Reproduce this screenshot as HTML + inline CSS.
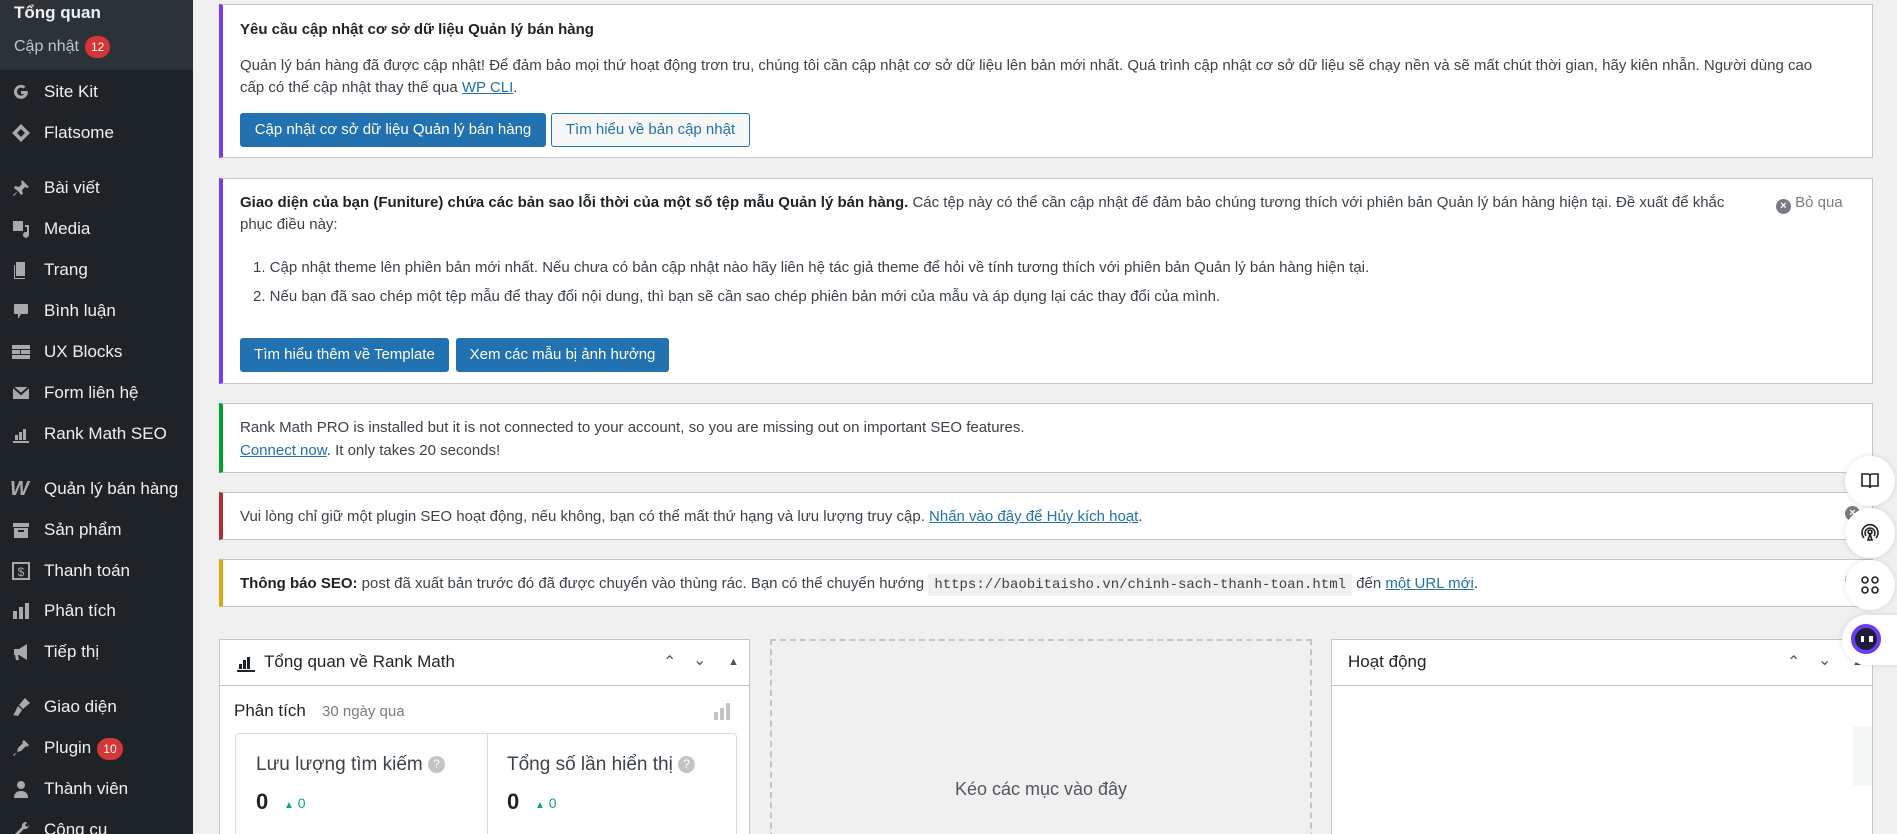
<!DOCTYPE html>
<html style="height:834px;overflow:hidden"><head><meta charset="utf-8"><style>
*{box-sizing:border-box;margin:0;padding:0}
body{width:1897px;height:834px;overflow:hidden;background:#f0f0f1;font-family:"Liberation Sans","Noto Sans CJK SC",sans-serif;color:#3c434a;font-size:15px;position:relative}
.sb{position:absolute;left:0;top:0;width:193px;height:834px;background:#1d2327}
.sbtop{position:absolute;left:0;top:0;width:193px;height:70px;background:#2c3338}
.mi{position:absolute;left:0;height:40px;line-height:40px;color:#f0f0f1;font-size:17px;white-space:nowrap}
.mi .ic{position:absolute;left:10px;top:10px;width:22px;height:20px;color:#a7aaad}
.mi span.t{position:absolute;left:44px}
.badge{display:inline-block;background:#d63638;color:#fff;border-radius:12px;font-size:12px;height:22px;line-height:22px;padding:0 6px;margin-left:6px;vertical-align:middle}
.n{position:absolute;left:219px;width:1654px;background:#fff;border:1px solid #c3c4c7;border-left:4px solid #72aee6}
.n p{position:absolute;left:17px;white-space:nowrap;line-height:22px}
a{color:#2271b1;text-decoration:underline}
.btn{position:absolute;height:34px;line-height:32px;border-radius:3px;background:#2271b1;color:#fff;font-size:15px;text-align:center;border:1px solid #2271b1}
.btn2{background:#f6f7f7;color:#2271b1}
.pb{position:absolute;background:#fff;border:1px solid #c3c4c7;overflow:hidden}
.ph{position:absolute;left:0;right:0;top:0;height:46px;border-bottom:1px solid #c3c4c7}
.ctl{position:absolute;top:12px;font-size:16px;color:#50575e}
.fc{position:absolute;width:50px;height:50px;border-radius:50%;background:#fff;box-shadow:0 0 6px rgba(0,0,0,.12)}
</style></head><body>
<div class="sb"><div class="sbtop"></div>
<div class="mi" style="top:-7px;font-weight:bold"><span class="t" style="left:14px">Tổng quan</span></div>
<div class="mi" style="top:27px;color:#c3c4c7;font-size:16px"><span class="t" style="left:14px">Cập nhật<span class="badge">12</span></span></div>
<div class="mi" style="top:72px"><svg class="ic" viewBox="0 0 20 20"><path d="M16 9H10v3h3.2A4 4 0 1 1 12.5 6.5l2-2A7 7 0 1 0 17 10z" fill="#a7aaad"/></svg><span class="t">Site Kit</span></div>
<div class="mi" style="top:113px"><svg class="ic" viewBox="0 0 20 20"><path d="M10 1L1 10l9 9 9-9zM10 6l4 4-4 4-4-4z" fill="#a7aaad"/></svg><span class="t">Flatsome</span></div>
<div class="mi" style="top:168px"><svg class="ic" viewBox="0 0 20 20"><path d="M11 2l7 7-2 1-2-1-3 3 1 4-2 1-3-4-4 5-1-1 5-4-4-3 1-2 4 1 3-3-1-2z" fill="#a7aaad"/></svg><span class="t">Bài viết</span></div>
<div class="mi" style="top:209px"><svg class="ic" viewBox="0 0 20 20"><rect x="2" y="2" width="10" height="10" fill="#a7aaad"/><path d="M14 6h4v10a3 3 0 1 1-2-3V8h-2z" fill="#a7aaad"/></svg><span class="t">Media</span></div>
<div class="mi" style="top:250px"><svg class="ic" viewBox="0 0 20 20"><path d="M5 2h9v14H5zM3 5h1v13h10v1H3z" fill="#a7aaad"/></svg><span class="t">Trang</span></div>
<div class="mi" style="top:291px"><svg class="ic" viewBox="0 0 20 20"><path d="M4 3h12a1 1 0 0 1 1 1v8a1 1 0 0 1-1 1h-6l-3 5v-5H4a1 1 0 0 1-1-1V4a1 1 0 0 1 1-1z" fill="#a7aaad"/></svg><span class="t">Bình luận</span></div>
<div class="mi" style="top:332px"><svg class="ic" viewBox="0 0 20 20"><path d="M1 3h18v4H1zM1 8h8v4H1zM10 8h9v4h-9zM1 13h18v4H1z" fill="#a7aaad"/></svg><span class="t">UX Blocks</span></div>
<div class="mi" style="top:373px"><svg class="ic" viewBox="0 0 20 20"><path d="M2 4h16v12H2z" fill="#a7aaad"/><path d="M2 4l8 7 8-7" stroke="#1d2327" stroke-width="2" fill="none"/></svg><span class="t">Form liên hệ</span></div>
<div class="mi" style="top:414px"><svg class="ic" viewBox="0 0 20 20"><path d="M2 17h16v2H2zM4 11h3v5H4zM8 8h3v8H8zM12 5h3v11h-3z" fill="#a7aaad"/></svg><span class="t">Rank Math SEO</span></div>
<div class="mi" style="top:469px"><span class="ic" style="font-weight:bold;font-style:italic;font-size:20px;line-height:20px;top:10px">W</span><span class="t">Quản lý bán hàng</span></div>
<div class="mi" style="top:510px"><svg class="ic" viewBox="0 0 20 20"><path d="M2 3h16v4H2zM3 8h14v10H3z" fill="#a7aaad"/><rect x="7" y="10" width="6" height="2" fill="#1d2327"/></svg><span class="t">Sản phẩm</span></div>
<div class="mi" style="top:551px"><svg class="ic" viewBox="0 0 20 20"><rect x="2" y="2" width="16" height="16" fill="none" stroke="#a7aaad" stroke-width="2"/><text x="10" y="15" font-size="12" text-anchor="middle" fill="#a7aaad" font-family="Liberation Sans">$</text></svg><span class="t">Thanh toán</span></div>
<div class="mi" style="top:591px"><svg class="ic" viewBox="0 0 20 20"><path d="M2 10h4v8H2zM8 6h4v12H8zM14 2h4v16h-4z" fill="#a7aaad"/></svg><span class="t">Phân tích</span></div>
<div class="mi" style="top:632px"><svg class="ic" viewBox="0 0 20 20"><path d="M3 7h5l8-5v16l-8-5H7l1 5H5l-1-5H3z" fill="#a7aaad"/></svg><span class="t">Tiếp thị</span></div>
<div class="mi" style="top:687px"><svg class="ic" viewBox="0 0 20 20"><path d="M14 1l5 5-7 6-4-4zM7 9l4 4-4 6-5-1 1-1z" fill="#a7aaad"/></svg><span class="t">Giao diện</span></div>
<div class="mi" style="top:728px"><svg class="ic" viewBox="0 0 20 20"><path d="M13 2l5 5-2 2-1-1-5 5-4 1-3 4-1-1 4-3 1-4 5-5-1-1z" fill="#a7aaad"/></svg><span class="t">Plugin<span class="badge">10</span></span></div>
<div class="mi" style="top:769px"><svg class="ic" viewBox="0 0 20 20"><circle cx="10" cy="6" r="4" fill="#a7aaad"/><path d="M3 19c0-5 3-7 7-7s7 2 7 7z" fill="#a7aaad"/></svg><span class="t">Thành viên</span></div>
<div class="mi" style="top:810px"><svg class="ic" viewBox="0 0 20 20"><path d="M15 2a4 4 0 0 0-4 5L2 16l2 2 9-9a4 4 0 0 0 5-4l-2 2-2-2 2-2z" fill="#a7aaad"/></svg><span class="t">Công cụ</span></div>
</div>

<div class="n" style="top:4px;height:154px;border-left-color:#7a3ae6">
<p style="top:14px;font-weight:bold;color:#1d2327">Yêu cầu cập nhật cơ sở dữ liệu Quản lý bán hàng</p>
<p style="top:50px">Quản lý bán hàng đã được cập nhật! Để đảm bảo mọi thứ hoạt động trơn tru, chúng tôi cần cập nhật cơ sở dữ liệu lên bản mới nhất. Quá trình cập nhật cơ sở dữ liệu sẽ chạy nền và sẽ mất chút thời gian, hãy kiên nhẫn. Người dùng cao</p>
<p style="top:72px">cấp có thể cập nhật thay thế qua <a>WP CLI</a>.</p>
<div class="btn" style="left:17px;top:108px;width:306px">Cập nhật cơ sở dữ liệu Quản lý bán hàng</div>
<div class="btn btn2" style="left:328px;top:108px;width:199px">Tìm hiểu về bản cập nhật</div>
</div>

<div class="n" style="top:178px;height:206px;border-left-color:#7a3ae6">
<p style="top:13px;white-space:normal;width:1515px"><b style="color:#1d2327">Giao diện của bạn (Funiture) chứa các bản sao lỗi thời của một số tệp mẫu Quản lý bán hàng.</b> Các tệp này có thể cần cập nhật để đảm bảo chúng tương thích với phiên bản Quản lý bán hàng hiện tại. Đề xuất để khắc phục điều này:</p>
<p style="left:1553px;top:13px;color:#787c82"><span style="display:inline-block;width:15px;height:15px;border-radius:50%;background:#787c82;color:#fff;font-size:11px;line-height:15px;text-align:center;font-weight:bold;vertical-align:-2px">×</span> Bỏ qua</p>
<p style="top:78px;left:30px">1. Cập nhật theme lên phiên bản mới nhất. Nếu chưa có bản cập nhật nào hãy liên hệ tác giả theme để hỏi về tính tương thích với phiên bản Quản lý bán hàng hiện tại.</p>
<p style="top:107px;left:30px">2. Nếu bạn đã sao chép một tệp mẫu để thay đổi nội dung, thì bạn sẽ cần sao chép phiên bản mới của mẫu và áp dụng lại các thay đổi của mình.</p>
<div class="btn" style="left:17px;top:159px;width:209px">Tìm hiểu thêm về Template</div>
<div class="btn" style="left:233px;top:159px;width:213px">Xem các mẫu bị ảnh hưởng</div>
</div>

<div class="n" style="top:403px;height:70px;border-left-color:#00a32a">
<p style="top:13px">Rank Math PRO is installed but it is not connected to your account, so you are missing out on important SEO features.</p>
<p style="top:36px"><a>Connect now</a>. It only takes 20 seconds!</p>
</div>

<div class="n" style="top:492px;height:48px;border-left-color:#b32d2e">
<p style="top:13px">Vui lòng chỉ giữ một plugin SEO hoạt động, nếu không, bạn có thể mất thứ hạng và lưu lượng truy cập. <a>Nhấn vào đây để Hủy kích hoạt</a>.</p>
<span style="position:absolute;left:1622px;top:13px;width:15px;height:15px;border-radius:50%;background:#787c82;color:#fff;font-size:11px;line-height:15px;text-align:center;font-weight:bold">×</span>
</div>

<div class="n" style="top:559px;height:48px;border-left-color:#dba617">
<p style="top:13px"><b style="color:#1d2327">Thông báo SEO:</b> post đã xuất bản trước đó đã được chuyển vào thùng rác. Bạn có thể chuyển hướng <code style="font-family:'Liberation Mono',monospace;font-size:14px;background:#f0f0f1;padding:3px 6px">https://baobitaisho.vn/chinh-sach-thanh-toan.html</code> đến <a>một URL mới</a>.</p>
<span style="position:absolute;left:1622px;top:13px;width:15px;height:15px;border-radius:50%;background:#787c82;color:#fff;font-size:11px;line-height:15px;text-align:center;font-weight:bold">×</span>
</div>

<div class="pb" style="left:219px;top:639px;width:531px;height:200px">
<div class="ph"><svg style="position:absolute;left:16px;top:14px" width="20" height="18" viewBox="0 0 20 18"><path d="M1 16h18v2H1zM3 10h3v5H3zM7 6h3v9H7zM11 3h3v12h-3z" fill="#1d2327"/></svg>
<span style="position:absolute;left:44px;top:12px;font-size:17px;color:#1d2327">Tổng quan về Rank Math</span>
<span class="ctl" style="left:443px">&#8963;</span><span class="ctl" style="left:473px;top:10px">&#8964;</span><span class="ctl" style="left:508px;font-size:11px;top:16px">▲</span></div>
<span style="position:absolute;left:14px;top:61px;font-size:17px;color:#1d2327">Phân tích</span>
<span style="position:absolute;left:102px;top:63px;font-size:15px;color:#787c82">30 ngày qua</span>
<svg style="position:absolute;left:493px;top:62px" width="18" height="18" viewBox="0 0 18 18"><path d="M1 10h4v8H1zM7 6h4v12H7zM13 1h4v17h-4z" fill="#c3c4c7"/></svg>
<div style="position:absolute;left:15px;top:93px;width:502px;height:120px;border:1px solid #dcdcde;border-radius:4px">
<div style="position:absolute;left:251px;top:0;bottom:0;border-left:1px solid #dcdcde"></div>
<span style="position:absolute;left:20px;top:20px;font-size:19px;color:#3c434a">Lưu lượng tìm kiếm <span style="display:inline-block;width:17px;height:17px;border-radius:50%;background:#c3c4c7;color:#fff;font-size:12px;line-height:17px;text-align:center;vertical-align:2px">?</span></span>
<span style="position:absolute;left:271px;top:20px;font-size:19px;color:#3c434a">Tổng số lần hiển thị <span style="display:inline-block;width:17px;height:17px;border-radius:50%;background:#c3c4c7;color:#fff;font-size:12px;line-height:17px;text-align:center;vertical-align:2px">?</span></span>
<span style="position:absolute;left:20px;top:55px;font-size:22px;font-weight:bold;color:#1d2327">0</span>
<span style="position:absolute;left:48px;top:61px;font-size:14px;color:#10a37f"><span style="font-size:10px">▲</span> 0</span>
<span style="position:absolute;left:271px;top:55px;font-size:22px;font-weight:bold;color:#1d2327">0</span>
<span style="position:absolute;left:299px;top:61px;font-size:14px;color:#10a37f"><span style="font-size:10px">▲</span> 0</span>
</div>
</div>

<div style="position:absolute;left:770px;top:639px;width:542px;height:210px;border:2px dashed #c3c4c7"></div>
<span style="position:absolute;left:770px;top:779px;width:542px;text-align:center;font-size:18px;color:#50575e">Kéo các mục vào đây</span>

<div class="pb" style="left:1331px;top:639px;width:542px;height:200px">
<div class="ph"><span style="position:absolute;left:16px;top:12px;font-size:17px;color:#1d2327">Hoạt động</span>
<span class="ctl" style="left:455px">&#8963;</span><span class="ctl" style="left:486px;top:10px">&#8964;</span><span class="ctl" style="left:520px;font-size:11px;top:16px">▲</span></div>
<div style="position:absolute;left:521px;top:86px;width:20px;height:60px;background:#f6f7f7"></div>
</div>

<div class="fc" style="left:1845px;top:456px"><svg style="position:absolute;left:15px;top:15px" width="20" height="20" viewBox="0 0 20 20" fill="none" stroke="#1d2327" stroke-width="1.6"><path d="M2 3h6a2 2 0 0 1 2 2v12a2 2 0 0 0-2-2H2zM18 3h-6a2 2 0 0 0-2 2v12a2 2 0 0 1 2-2h6z"/></svg></div>
<div class="fc" style="left:1845px;top:508px"><svg style="position:absolute;left:15px;top:15px" width="20" height="20" viewBox="0 0 20 20" fill="none" stroke="#1d2327" stroke-width="1.6"><circle cx="10" cy="9" r="2"/><path d="M6 13a5 5 0 1 1 8 0M4 15a8 8 0 1 1 12 0M10 11l-2 6h4z"/></svg></div>
<div class="fc" style="left:1845px;top:560px"><svg style="position:absolute;left:15px;top:15px" width="20" height="20" viewBox="0 0 20 20" fill="none" stroke="#1d2327" stroke-width="1.6"><rect x="2" y="2" width="6" height="6" rx="3"/><rect x="12" y="2" width="6" height="6" rx="3"/><rect x="2" y="12" width="6" height="6" rx="3"/><rect x="12" y="12" width="6" height="6" rx="3"/></svg></div>
<div style="position:absolute;left:1842px;top:615px;width:60px;height:50px;background:#fff;border-radius:25px 0 0 25px;box-shadow:0 0 6px rgba(0,0,0,.12)"><div style="position:absolute;left:9px;top:9px;width:30px;height:30px;border-radius:50%;border:4px solid #6b3df0;background:#1d1d3a"></div><span style="position:absolute;left:19px;top:21px;width:3px;height:6px;background:#fff"></span><span style="position:absolute;left:27px;top:21px;width:4px;height:6px;background:#fff"></span></div>
</body></html>
